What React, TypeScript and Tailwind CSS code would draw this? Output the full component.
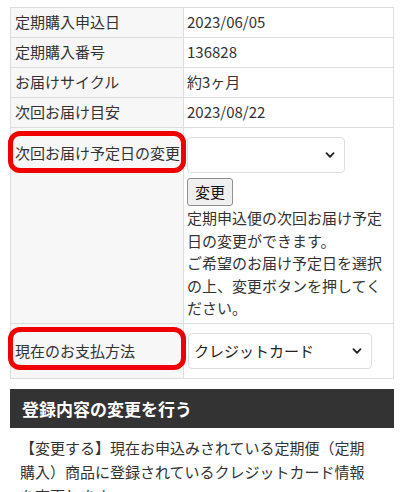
import React from "react";

const font = { fontFamily: '"Noto Sans CJK JP", "Noto Sans", sans-serif' };

function Chevron() {
  return (
    <svg width="10" height="6" viewBox="0 0 10 6" className="shrink-0">
      <path d="M1.5 1.2 L5 4.8 L8.5 1.2" fill="none" stroke="#222" strokeWidth="1.8" strokeLinecap="round" strokeLinejoin="round" />
    </svg>
  );
}

function Row({ label, value }: { label: string; value: string }) {
  return (
    <div className="flex h-[30px] border-b border-[#ddd]">
      <div className="w-[173px] shrink-0 border-r border-[#ddd] bg-[#f7f7f7] pl-[4px] flex items-center">{label}</div>
      <div className="flex-1 pl-[3px] flex items-center">{value}</div>
    </div>
  );
}

export default function App() {
  return (
    <div className="w-[400px] h-[492px] overflow-hidden bg-white text-[15px] leading-[1.5] text-[#333]" style={font}>
      <div className="pt-[7px] pl-[10px]">
        <div className="w-[384px] border border-[#ddd]">
          <Row label="定期購入申込日" value="2023/06/05" />
          <Row label="定期購入番号" value="136828" />
          <Row label="お届けサイクル" value="約3ヶ月" />
          <Row label="次回お届け目安" value="2023/08/22" />
          <div className="flex h-[196px] border-b border-[#ddd]">
            <div className="relative w-[173px] shrink-0 border-r border-[#ddd] bg-[#f7f7f7] pl-[4px] pt-[14px]">
              次回お届け予定日の変更
              <div className="absolute left-[-3px] top-[3px] w-[178px] h-[42px] border-[5px] border-[#f00000] rounded-[12px]" />
            </div>
            <div className="flex-1 pl-[3px] pt-[9px] flex flex-col items-start">
              <div className="w-[158px] h-[36px] border border-[#ddd] rounded-[4px] bg-white flex items-center justify-end pr-[9px]">
                <Chevron />
              </div>
              <div className="mt-[5px] w-[46px] h-[28px] border border-[#8f8f8f] rounded-[3px] bg-[#efefef] flex items-center justify-center text-[#111]">変更</div>
              <p className="mt-[1px] text-[#333]">
                定期申込便の次回お届け予定日の変更ができます。<br />
                ご希望のお届け予定日を選択の上、変更ボタンを押してください。
              </p>
            </div>
          </div>
          <div className="flex h-[54px]">
            <div className="relative w-[173px] shrink-0 border-r border-[#ddd] bg-[#f7f7f7] pl-[4px] flex items-center">
              現在のお支払方法
              <div className="absolute left-[-3px] top-[3px] w-[178px] h-[43px] border-[5px] border-[#f00000] rounded-[12px]" />
            </div>
            <div className="flex-1 pl-[4px] flex items-center">
              <div className="w-[184px] h-[36px] border border-[#ddd] rounded-[4px] bg-white flex items-center justify-between pl-[5px] pr-[9px] text-[#222]">
                クレジットカード
                <Chevron />
              </div>
            </div>
          </div>
        </div>
        <div className="mt-[10px] w-[384px] h-[39px] bg-[#333] text-white font-bold text-[17px] flex items-center pl-[12px]">
          登録内容の変更を行う
        </div>
        <p className="mt-[8px] w-[384px] pl-[10px] pr-[20px] text-[15px] leading-[24px] text-[#333]">
          【変更する】現在お申込みされている定期便（定期購入）商品に登録されているクレジットカード情報を変更します。
        </p>
      </div>
    </div>
  );
}
